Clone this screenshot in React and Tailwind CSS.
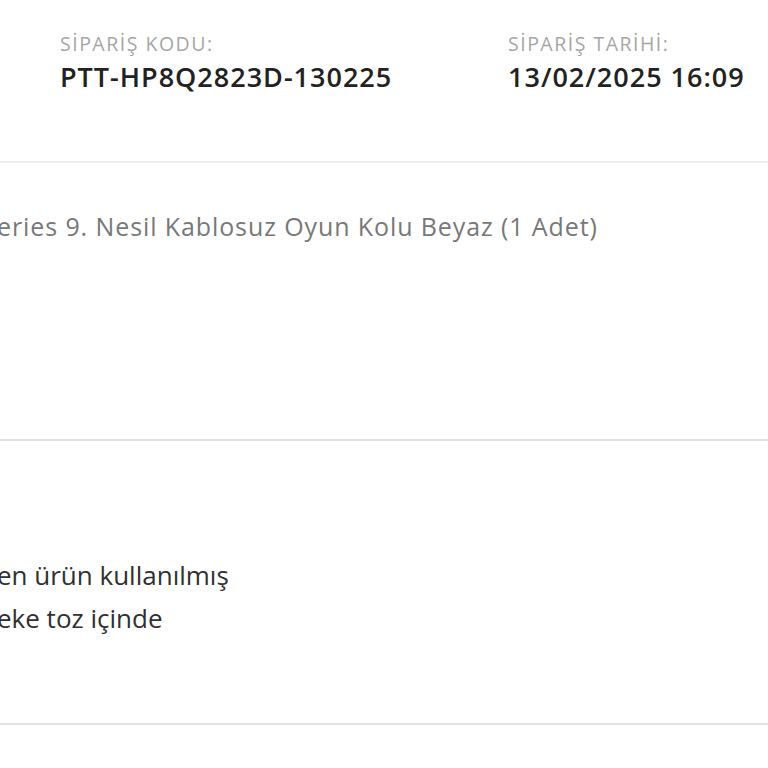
import React from 'react';

const Info = ({ label, value, className = '' }) => (
  <div className={className}>
    <div className="text-[19.5px] leading-[24px] tracking-[1.5px] text-[#a6a6a6]">{label}</div>
    <div className="mt-[4px] text-[27px] leading-[34px] tracking-[1px] font-semibold text-[#222222]">{value}</div>
  </div>
);

export default function App() {
  return (
    <div lang="tr" className="w-[768px] h-[768px] overflow-hidden bg-white font-['Open_Sans','Noto_Sans',sans-serif]">
      {/* order header */}
      <div className="h-[163px] flex pl-[60px] pt-[32px] border-b-2 border-[#ececec]">
        <Info label="SİPARİŞ KODU:" value="PTT-HP8Q2823D-130225" className="w-[448px]" />
        <Info label="SİPARİŞ TARİHİ:" value="13/02/2025 16:09" />
      </div>

      {/* product */}
      <div className="h-[278px] pt-[46px] border-b-2 border-[#e2e2e2]">
        <p className="-ml-[3px] whitespace-nowrap text-[25px] leading-[34px] tracking-[0.9px] text-[#787878]">
          eries 9. Nesil Kablosuz Oyun Kolu Beyaz (1 Adet)
        </p>
      </div>

      {/* return reason */}
      <div className="h-[284px] pt-[116px] border-b-2 border-[#e2e2e2]">
        <div className="-ml-[3px] flex flex-col gap-[7px] whitespace-nowrap text-[26px] leading-[36px] text-[#303030]">
          <p>en ürün kullanılmış</p>
          <p>eke toz içinde</p>
        </div>
      </div>
    </div>
  );
}
